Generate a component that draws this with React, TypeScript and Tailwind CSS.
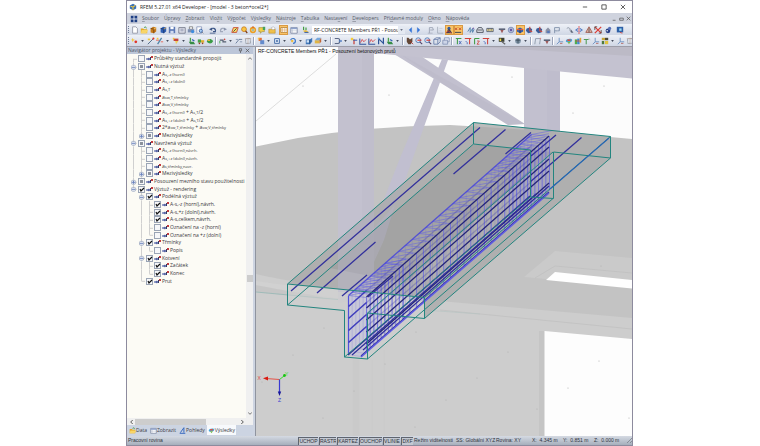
import React from "react";

type Kids = { children?: React.ReactNode };

/* ---------- toolbar glyphs, all on a 10 x 10 grid ---------- */

const glyphs: Record<string, React.ReactNode> = {
  new: <path d="M2 1h4l2 2v6H2z" fill="#fff" stroke="#8a8fa0" />,
  open: (<><path d="M1 3h3l1 1h4v5H1z" fill="#e5a823" /><path d="M2 5h8L8 9H1z" fill="#f8d568" /><path d="M5 2l2-1 1 2" stroke="#3d9440" fill="none" /></>),
  cubeOrange: (<><path d="M2 3l3-2 4 1v5L6 9 2 8z" fill="#c77a1b" /><path d="M2 3l4 1v5" stroke="#6b3d0c" fill="none" /><path d="M6 4l3-2" stroke="#f9dd8c" /></>),
  cubeBlue: (<><path d="M2 3l3-2 4 1v5L6 9 2 8z" fill="#2e5fb5" /><path d="M2 3l4 1v5" stroke="#16305f" fill="none" /><path d="M6 4l3-2" stroke="#f0b040" /></>),
  save: (<><path d="M1 1h8v8H1z" fill="#5b78b5" /><path d="M3 1h4v3H3z" fill="#fff" /><path d="M3 6h4v3H3z" fill="#d3dcf0" /></>),
  doc: (<><path d="M1 2h8v7H1z" fill="#e3e5ee" stroke="#6b7082" /><path d="M3 4h4M3 6h4" stroke="#8289a5" /></>),
  print: (<><path d="M3 1h4v3H3z" fill="#fff" stroke="#777" /><path d="M1 4h8v4H1z" fill="#7e8fb0" /><circle cx="7" cy="7" r="2" fill="#3d8de0" /></>),
  preview: (<><path d="M1 1h6v8H1z" fill="#fff" stroke="#8794b8" /><circle cx="6" cy="6" r="2" fill="#a9d0f5" stroke="#335c9e" /><path d="M8 8l1 1" stroke="#333" /></>),
  undo: (<><path d="M2 5c2-4 7-2 6 2H5" fill="none" stroke="#3c5687" strokeWidth="1.4" /><path d="M0 4l4-2v4z" fill="#3c5687" /><path d="M1 9h7" stroke="#3c5687" /></>),
  redo: (<><path d="M8 5c-2-4-7-2-6 2h3" fill="none" stroke="#a0a8ba" strokeWidth="1.4" /><path d="M10 4L6 2v4z" fill="#8b95ad" /></>),
  plane: (<><path d="M3 2h6L7 8H1z" fill="#f7e06b" stroke="#c43a2b" /><path d="M3 7l4-4" stroke="#333" /></>),
  zoom: (<><circle cx="5" cy="4" r="3" fill="#f9c646" stroke="#c67b20" /><path d="M7 6l2 3" stroke="#7d3c15" strokeWidth="1.6" /></>),
  ring: (<><circle cx="5" cy="5" r="3" fill="none" stroke="#eb9f22" strokeWidth="2" /><circle cx="5" cy="5" r="1" fill="#5c9c3a" /><path d="M5 0v3" stroke="#c74528" /></>),
  chat: (<><path d="M1 2h7v5H5L3 9V7H1z" fill="#f3cf45" stroke="#8c7420" strokeWidth=".6" /><path d="M6 1h3v4H6z" fill="#46a05a" /></>),
  folderUp: (<><path d="M1 4h8v5H1z" fill="#f0c04a" stroke="#ae7e1e" strokeWidth=".6" /><path d="M4 2l3-1 2 2-3 2z" fill="#fff" stroke="#999" strokeWidth=".6" /></>),
  table: (<><path d="M1 2h8v7H1z" fill="#fff" stroke="#76809c" /><path d="M1 2h8v2H1z" fill="#8ea2cc" /><path d="M3 4v5M1 6h8" stroke="#a7b0c5" strokeWidth=".6" /></>),
  tableHot: (<><path d="M1 2h8v6H1z" fill="#fff" stroke="#b07a2c" /><path d="M3 2v6M6 2v6M1 5h8" stroke="#d79a50" strokeWidth=".7" /></>),
  load: (<><path d="M2 1v4M5 2v3" stroke="#3e9a3b" strokeWidth="1.4" /><path d="M1 6l4-1 4 3H4z" fill="#e8bb3c" /><path d="M3 8h5" stroke="#2f58a8" strokeWidth="1.2" /></>),
  prev: <path d="M7 2L4 5l3 3z" fill="#3473d8" stroke="#3473d8" strokeWidth=".6" />,
  next: <path d="M3 2l3 3-3 3z" fill="#3473d8" stroke="#3473d8" strokeWidth=".6" />,
  greyTool: (<><path d="M3 9V2h4l1 3H4" fill="none" stroke="#949cad" /><path d="M1 9h6" stroke="#a9b0bf" /></>),
  greyAxis: (<><path d="M2 1v8h7" fill="none" stroke="#a1a9b8" /><path d="M4 3h4M4 6h3" stroke="#c8cdd7" /></>),
  people: (<><circle cx="5" cy="3" r="2" fill="#32599e" /><path d="M1 9l3-5h2l3 5z" fill="#3e4256" /><path d="M1 9l3-3 4 3" stroke="#d83b2e" fill="none" /></>),
  xx: (<><path d="M1 2l3 3m0-3L1 5M6 2l3 3m0-3L6 5" stroke="#c23f25" /><path d="M1 8h8" stroke="#555" strokeWidth="1.4" /></>),
  wave: (<><path d="M1 7l3-5v6l3-5v5l2-4" fill="none" stroke="#4376a6" /><circle cx="8" cy="3" r="1" fill="#8a6fb1" /></>),
  car: (<><path d="M1 5l2-3h4l2 3v3H1z" fill="#dfe3ea" stroke="#3b404d" /><path d="M2 5h6" stroke="#3b404d" /></>),
  ruler: (<><path d="M1 3h8v4H1z" fill="#fbe695" stroke="#44506c" /><path d="M3 3v3M5 3v3M7 3v3" stroke="#44506c" strokeWidth=".7" /></>),
  beam: (<><path d="M1 3h8v2H1z" fill="#5c6377" /><path d="M3 5l2 4 2-4" fill="#9c5858" /></>),
  gear: (<><circle cx="5" cy="5" r="3.5" fill="#b2bdd9" stroke="#57699c" strokeWidth=".7" /><circle cx="5" cy="5" r="1.5" fill="#6356a4" /></>),
  solid: (<><path d="M1 4l4-2 4 2v3L5 9 1 7z" fill="#375fa9" /><path d="M1 4l4 1 4-1" stroke="#ec5a3f" fill="none" strokeWidth="1.4" /><path d="M5 5v4" stroke="#182f5a" /></>),
  dice: (<><path d="M2 3l4-1 3 2-1 4-4 1-3-3z" fill="#395d9c" /><path d="M6 1v5l3 1" fill="none" stroke="#d54a39" strokeWidth="1.4" /></>),
  house: (<><path d="M2 9V5l3-3 3 3v4z" fill="#8a91a5" /><path d="M4 9V6h3v3z" fill="#5578bb" /></>),
  flag: (<><path d="M2 9V2h6v4H2" fill="none" stroke="#8797af" strokeWidth="1.2" /><path d="M3 8l4-4" stroke="#bac3d2" /></>),
  arc: (<><path d="M1 3c3-2 4 0 4 2s2 3 4 3" fill="none" stroke="#7c8797" /><path d="M6 4l3 4H6z" fill="#5a6475" /></>),
  mirror: (<><path d="M5 0v10" stroke="#e04343" /><path d="M4 3L1 5l3 2M6 3l3 2-3 2" fill="none" stroke="#507bc4" strokeWidth="1.3" /></>),
  tri: (<><path d="M5 1l4 7H1z" fill="#e4b5a7" stroke="#9b5244" /><path d="M5 3v5" stroke="#444" /></>),
  cross: (<><path d="M1 1l8 8M9 1L1 9" stroke="#dc3a32" strokeWidth="1.5" /><path d="M1 5V1h3M9 5v4H6" stroke="#57443e" fill="none" /></>),
  ball: (<><circle cx="5" cy="6" r="3" fill="#273e86" /><circle cx="7" cy="3" r="2" fill="#5871ba" /><circle cx="4" cy="6" r="1" fill="#eee" /></>),
  node: (<><circle cx="6" cy="6" r="1.7" fill="#df3328" /><path d="M2 1l1 2 2 .5-2 1-1 2-.5-2L0 3.500l1.500-.5z" fill="#f3c534" /></>),
  line: (<><path d="M1 9l7-7" stroke="#4e6c88" strokeWidth="1.200" /><circle cx="8" cy="2" r="1.300" fill="#df3328" /><path d="M1 2h3v2H1z" fill="#f3c534" /></>),
  member: (<><path d="M2 9l5-8" stroke="#4e85a8" strokeWidth="1.600" /><path d="M0 4h4M6 6h3" stroke="#e45645" /><path d="M1 1h2v2H1z" fill="#f3c534" /></>),
  surface: (<><path d="M2 2h6v3H2z" fill="#c6453a" /><path d="M4 5h4L5 9z" fill="#f0ce5c" /><path d="M1 1h2v2H1z" fill="#f3c534" /></>),
  support: (<><path d="M3 1v5" stroke="#4ba04b" strokeWidth="1.600" /><path d="M1 6h6l2 3H3z" fill="#358c46" /><path d="M5 3l3 2" stroke="#3563b2" strokeWidth="1.500" /></>),
  truck: (<><path d="M1 3h4v4H1z" fill="#4aa24a" /><path d="M5 4h4v3H5z" fill="#ddaf2e" /><circle cx="3" cy="8" r="1" fill="#953d28" /><circle cx="7" cy="8" r="1" fill="#953d28" /></>),
  leaf: (<><path d="M1 6c0-4 5-5 8-1-2 4-5 4-8 1z" fill="#3a9b45" /><path d="M2 3h3v2H2z" fill="#e3b436" /></>),
  stairs: (<><path d="M1 4h4v2h4" stroke="#555f70" strokeWidth="1.500" fill="none" /><path d="M1 8V5" stroke="#3aa23e" /><circle cx="7" cy="3" r="1" fill="#d2473a" /></>),
  dim: (<><path d="M1 8l4-5h4" stroke="#566b8b" fill="none" /><path d="M1 3h3M6 6h3" stroke="#7c8da8" /></>),
  grid: (<><path d="M2 2h6v6H2z" fill="none" stroke="#82868f" strokeDasharray="1 .5" /><path d="M1 2h8M5 1v8" stroke="#bb9b8c" strokeWidth=".6" /></>),
  pick: (<><path d="M2 1h4v4H2z" fill="#e57038" /><path d="M4 4h5v5H4z" fill="#648bcc" /><path d="M1 1h2v2H1z" fill="#f6cb46" /></>),
  frame: (<><path d="M2 2h6v6H2z" fill="#dfe8f7" stroke="#4b72a9" strokeWidth="1.200" /><circle cx="5" cy="5" r="1.300" fill="#4b72a9" /></>),
  rot: (<><path d="M2 4c1-3 6-3 6 1 0 3-2 3-3 3" fill="none" stroke="#3b76c8" strokeWidth="1.500" /><circle cx="4" cy="5" r="1.500" fill="#efbd40" /></>),
  cubeSky: (<><path d="M1 3h5l3-2v5L6 9H1z" fill="#3f76b8" /><path d="M2 4h3v3H2z" fill="#cfe3f7" /><path d="M6 3v6" stroke="#234a80" /></>),
  boxGold: (<><path d="M1 4h6v4H1z" fill="#e0b545" /><path d="M1 4l3-3h5L7 4z" fill="#76a7dc" /><path d="M7 4l2-3v5L7 8z" fill="#c26534" /></>),
  frameArrow: (<><path d="M1 2h4c3 0 3 6 0 6H1" fill="none" stroke="#5c6987" strokeWidth="1.300" /><path d="M6 5h4" stroke="#4171c0" strokeWidth="1.500" /></>),
  pin: (<><path d="M5 3v6" stroke="#c63a33" strokeWidth="1.500" /><path d="M1 1h3v3H1z" fill="#f5cd3b" /><path d="M4 4h5" stroke="#3a5cad" strokeWidth="1.300" /></>),
  graph: (<><path d="M1 2v7h8" stroke="#35549a" fill="none" strokeWidth="1.300" /><path d="M2 7l2-4 2 3 3-3" stroke="#d43d42" fill="none" /></>),
  n: (<><path d="M2 9V2l6 6V1" stroke="#2d5499" strokeWidth="1.500" fill="none" /><path d="M1 1h2v2H1z" fill="#62a4dc" /></>),
  cat: (<><path d="M1 1h2l2 2 3-2v5l-2 3H3L1 6z" fill="#624737" /><path d="M5 5l4 4" stroke="#b0342c" /></>),
  zoomRed: (<><circle cx="4" cy="4" r="3" fill="#dbe9fa" stroke="#446ba9" /><path d="M3 4h5" stroke="#d63a34" strokeWidth="1.500" /><path d="M6 6l3 3" stroke="#513f64" strokeWidth="1.300" /></>),
  wire: (<><path d="M1 3h5v6H1zM6 3l3-2v5L6 9M1 3l3-2h5" fill="none" stroke="#6278a6" /></>),
  copy: (<><path d="M3 1h6v5H3z" fill="#e5e9f3" stroke="#8290b2" /><path d="M1 4h6v5H1z" fill="#cdd5e8" stroke="#8290b2" /></>),
  viewX: (<><path d="M1 2h7M3 2v7" stroke="#3f9b45" strokeWidth="1.300" /><path d="M5 5l3 4M8 5L5 9" stroke="#3c60b5" /></>),
  viewY: (<><path d="M1 2h8M7 2v7" stroke="#d1433b" strokeWidth="1.300" /><path d="M2 5l2 2v2" stroke="#3c60b5" fill="none" /></>),
  viewZ: (<><path d="M2 2h6M2 2v7" stroke="#3f9b45" strokeWidth="1.300" /><path d="M5 5h3L5 9h3" stroke="#d1433b" fill="none" /></>),
  dark: (<><path d="M1 1h7v5H1z" fill="#3b3f33" /><path d="M2 2h2v3H2z" fill="#f0d94b" /><path d="M5 6l4 3" stroke="#666" strokeWidth="1.500" /></>),
  sphere: (<><circle cx="5" cy="5" r="3.500" fill="#7d91a4" /><path d="M2 4h6M5 2v6" stroke="#394957" /></>),
  pi: (<><path d="M1 9l1-7h6L7 9" fill="none" stroke="#929eae" strokeWidth="1.200" /><circle cx="8" cy="2" r="1" fill="#df8883" /></>),
  axis: (<><path d="M4 1v5L1 9M4 6h5" stroke="#5e86bd" fill="none" /><path d="M5 8h3" stroke="#b35e57" /></>),
  pencil: (<><path d="M1 9h8M2 8l5-7v7" stroke="#3567bf" fill="none" strokeWidth="1.400" /></>),
  palette: (<><path d="M1 5c0-3 8-4 8-1S1 8 1 5z" fill="#45a5d9" /><path d="M3 3h4v2H3z" fill="#e24e3d" /><path d="M3 6h4l-2 3z" fill="#7dbd48" /></>),
  rainbow: (<><path d="M1 3h3v6H1z" fill="#4caf50" /><path d="M4 2h3v7H4z" fill="#3f8ad0" /><path d="M7 1h2v6H7z" fill="#e0a13c" /><path d="M2 5h5" stroke="#d84838" /></>),
  tool: (<><path d="M4 9V3M1 3h6" stroke="#4f9a57" strokeWidth="1.300" /><path d="M7 1l2 3" stroke="#bbb" /></>),
  mosaic: (<><path d="M1 1h4v3H1z" fill="#c7a63a" /><path d="M5 1h4v3H5z" fill="#4c4a38" /><path d="M1 5h3v4H1z" fill="#4f7b3e" /><path d="M5 5h4v4H5z" fill="#e0c33d" /></>),
  win: (<><path d="M1 1h8v8H1z" fill="#1e3f84" /><path d="M5 1v8M1 5h8" stroke="#fff" /></>),
  app: (<><path d="M1 3l4-2 4 2v4L5 9 1 7z" fill="#3770b7" /><path d="M2 4l3 1v4M5 5l3-2" stroke="#f2c63b" fill="none" strokeWidth="1.300" /></>),
  result: (<><path d="M1 1h8v7H1z" fill="#2d5fa7" /><path d="M4 3h3v3H4z" fill="#9ddcf4" /><path d="M5 8l3 1" stroke="#d33c35" /></>),
};

const Glyph = ({ name, className = "size-[9px]" }: { name: string; className?: string }) => (
  <svg viewBox="0 0 10 10" className={`shrink-0 ${className}`} aria-hidden="true">{glyphs[name]}</svg>
);

/* ---------- toolbars ----------
   "*name" is a pressed tool, "v" a drop-down arrow, "|" a divider */

const Tool = ({ code }: { code: string }) => {
  if (code === "|")
    return <span className="mx-[1px] h-[8px] w-[2px] shrink-0 border-l border-[#9aa3b8] bg-white" />;
  if (code === "v")
    return (
      <button aria-label="Další" className="flex w-[7px] shrink-0 items-center justify-center">
        <svg viewBox="0 0 4 3" className="h-[2px] w-[3px]"><path d="M0 0h4L2 3z" fill="#444b5c" /></svg>
      </button>
    );
  const on = code.startsWith("*");
  const name = on ? code.slice(1) : code;
  return (
    <button aria-label={name} className={`flex h-[10px] w-[9px] shrink-0 items-center justify-center ${on ? "bg-[#fbc466] outline-1 -outline-offset-1 outline-[#d99a45]" : ""}`}>
      <Glyph name={name} className="size-[8px]" />
    </button>
  );
};

const groupsA: [string, string[]][] = [
  ["w-[75px]", ["new", "open", "cubeOrange", "cubeBlue", "save", "doc", "print", "preview"]],
  ["w-[19px]", ["undo", "redo"]],
  ["w-[46px]", ["plane", "zoom", "ring", "chat", "folderUp"]],
  ["w-[19px]", ["*tableHot", "table"]],
  ["w-[9px]", ["load"]],
];
const groupsB: [string, string[]][] = [
  ["w-[18px]", ["prev", "next"]],
  ["w-[37px]", ["greyTool", "greyAxis", "*people", "*xx"]],
  ["w-[28px]", ["wave", "car", "ruler"]],
  ["w-[65px]", ["beam", "gear", "*solid", "dice", "dice", "house", "flag"]],
  ["w-[47px]", ["arc", "mirror", "tri", "cross", "ball"]],
  ["w-[9px]", ["result"]],
];

const Group = ({ width, items }: { width: string; items: string[] }) => (
  <div className={`flex shrink-0 justify-between ${width}`}>
    {items.map((c, i) => <Tool key={i} code={c} />)}
  </div>
);

const rowTwo =
  "node v line member v surface v support truck leaf | stairs v dim grid | pick v frame v rot v cubeSky boxGold v | frameArrow v pin graph graph n support v | cat zoomRed zoomRed wire copy | viewX viewY viewZ viewY v dark v sphere v | pi beam | axis palette rainbow tool axis mosaic v axis grid".split(" ");

const Grip = () => <span className="mx-[1px] h-[7px] w-[1px] shrink-0 border-l border-dotted border-[#6f7a96]" />;

const menus = ["Soubor", "Úpravy", "Zobrazit", "Vložit", "Výpočet", "Výsledky", "Nástroje", "Tabulka", "Nastavení", "Developers", "Přídavné moduly", "Okno", "Nápověda"];
const hotKey: Record<string, number> = { Úpravy: 2, Vložit: 3, Výpočet: 2, Výsledky: 5, Nastavení: 5, "Přídavné moduly": 3 };

/* ---------- navigator tree ---------- */

const S = ({ children }: Kids) => <span className="text-[4px]">{children}</span>;

type Row = { g: string; state: 0 | 1 | 2; label: React.ReactNode };
/* g: one letter per guide column: f first, t tee, l last, v line, o empty, - open, + closed, e open and last */
const rows: Row[] = [
  { g: "f", state: 0, label: "Průběhy standardně propojit" },
  { g: "-", state: 2, label: "Nutná výztuž" },
  { g: "vt", state: 0, label: <>A<S>s,-z (horní)</S></> },
  { g: "vt", state: 0, label: <>A<S>s,+z (dolní)</S></> },
  { g: "vt", state: 0, label: <>A<S>s,T</S></> },
  { g: "vt", state: 0, label: <>a<S>sw,T,třmínky</S></> },
  { g: "vt", state: 0, label: <>a<S>sw,V,třmínky</S></> },
  { g: "vt", state: 0, label: <>A<S>s,-z (horní)</S> + A<S>s,T</S>/2</> },
  { g: "vt", state: 0, label: <>A<S>s,+z (dolní)</S> + A<S>s,T</S>/2</> },
  { g: "vt", state: 0, label: <>2*a<S>sw,T,třmínky</S> + a<S>sw,V,třmínky</S></> },
  { g: "v+", state: 2, label: "Mezivýsledky" },
  { g: "-", state: 2, label: "Navržená výztuž" },
  { g: "vt", state: 0, label: <>A<S>s,-z (horní),návrh.</S></> },
  { g: "vt", state: 0, label: <>A<S>s,+z (dolní),návrh.</S></> },
  { g: "vt", state: 0, label: <>a<S>s,třmínky,navr.</S></> },
  { g: "v+", state: 2, label: "Mezivýsledky" },
  { g: "+", state: 2, label: "Posouzení mezního stavu použitelnosti" },
  { g: "e", state: 1, label: "Výztuž - rendering" },
  { g: "o-", state: 1, label: "Podélná výztuž" },
  { g: "ovt", state: 1, label: "A-s,-z (horní),návrh." },
  { g: "ovt", state: 1, label: "A-s,+z (dolní),návrh." },
  { g: "ovt", state: 1, label: "A-s,celkem,návrh." },
  { g: "ovt", state: 0, label: "Označení na -z (horní)" },
  { g: "ovl", state: 0, label: "Označení na +z (dolní)" },
  { g: "o-", state: 1, label: "Třmínky" },
  { g: "ovl", state: 0, label: "Popis" },
  { g: "o-", state: 1, label: "Kotvení" },
  { g: "ovt", state: 1, label: "Začátek" },
  { g: "ovl", state: 1, label: "Konec" },
  { g: "ol", state: 1, label: "Prut" },
];

const Guide = ({ k }: { k: string }) => {
  const box = "-+e".includes(k);
  const art = (
    <svg viewBox="0 0 8 8" preserveAspectRatio="none" className="size-full" stroke="#cfcfcf" strokeWidth="1" fill="none">
      {"tv-+".includes(k) && <path d="M4.500 0v8" />}
      {k === "f" && <path d="M4.500 4v4" />}
      {"le".includes(k) && <path d="M4.500 0v4" />}
      {k !== "v" && k !== "o" && <path d="M4.500 4.500H8" />}
      {box && <rect x="2.500" y="2.500" width="4" height="4" rx="1" fill="#eef1f8" stroke="#a9b3c8" />}
      {box && <path d="M3 4.500h3" stroke="#6a83bd" />}
      {k === "+" && <path d="M4.500 3v3" stroke="#6a83bd" />}
    </svg>
  );
  return box
    ? <button aria-label="Rozbalit" className="h-full w-[8px] shrink-0">{art}</button>
    : <span className="h-full w-[8px] shrink-0">{art}</span>;
};

const TreeRow = ({ g, state, label }: Row) => (
  <div className="flex min-h-0 items-center">
    {g.split("").map((k, i) => <Guide key={i} k={k} />)}
    <label className="flex items-center whitespace-nowrap">
      <span className="mx-[1px] grid size-[7px] shrink-0">
        <input type="checkbox" defaultChecked={state === 1} className="col-start-1 row-start-1 size-[7px] appearance-none border border-[#9aa4b5] bg-[#f6f7f9]" />
        {state === 1 && (
          <svg viewBox="0 0 7 7" className="pointer-events-none col-start-1 row-start-1 size-[7px]"><path d="M2 3l1 2 3-3" fill="none" stroke="#111" strokeWidth="1.200" /></svg>
        )}
        {state === 2 && <span className="pointer-events-none col-start-1 row-start-1 m-[2px] bg-[#8b919b]" />}
      </span>
      <svg viewBox="0 0 7 5" className="mr-[1px] h-[5px] w-[7px] shrink-0">
        <path d="M0 3h2" stroke="#33469a" />
        <circle cx="2.800" cy="3" r="1.200" fill="#5664a5" />
        <path d="M5 0h2v2H5z" fill="#c23a3e" />
        <path d="M4.500 1v3" stroke="#333a62" />
      </svg>
      <span className="h-[7px] text-[5px] leading-[7px] text-[#37373a]">{label}</span>
    </label>
  </div>
);

/* ---------- 3D view ---------- */

const DX = 183;
const DY = -161;
const stirrups: number[] = [];
for (let t = 0; t < 0.2; t += 0.02) stirrups.push(t);
for (let t = 0.2; t < 0.78; t += 0.037) stirrups.push(t);
for (let t = 0.78; t <= 1.001; t += 0.02) stirrups.push(t);

const barHeights = [0, 11, 23, 35, 47];

const Cage = () => (
  <g fill="none">
    <path d="M348 296V355L361 357L380 340V286L366 298Z" fill="#b8b6f2" fillOpacity=".25" />
    <path d="M510 170V224L549 191V136Z" fill="#8a88e4" fillOpacity=".2" />
    <g stroke="#6866de" strokeWidth="1">
      {stirrups.map((t, i) => {
        const x = 348.5 + DX * t;
        const y = 295.5 + DY * t;
        return (
          <g key={i}>
            <path d={`M${x} ${y}V${y + 59}L${x + 12} ${y + 61}L${x + 18} ${y + 56}`} strokeOpacity=".22" />
            <path d={`M${x + 18} ${y + 2}V${y + 56}`} strokeOpacity=".8" />
            <path d={`M${x} ${y}L${x + 18} ${y + 2}M${x} ${y}L${x + 21} ${y - 4}`} strokeOpacity=".7" strokeWidth=".8" />
          </g>
        );
      })}
    </g>
    <path d="M348.500 296V355" stroke="#5250dc" strokeWidth="1.200" />
    <g stroke="#242478" strokeWidth="1.300">
      {barHeights.map((h) => (
        <g key={h}>
          <path d={`M348.500 ${295.5 + h}L${348.5 + DX} ${295.5 + h + DY}`} strokeOpacity={h ? ".3" : ".9"} stroke={h ? "#3737ae" : "#4a48d8"} />
          <path d={`M366.500 ${297 + h}L549 ${136 + h}`} />
          {h > 0 && <path d={`M348.500 ${295.5 + h}L366.500 ${279.5 + h}`} stroke="#3f3dbd" />}
        </g>
      ))}
    </g>
    <g stroke="#2f2d98" strokeWidth="1.200">
      <path d="M361 356L549 192M363 350L549 186M352 355L536 194M348 355L530 196" />
    </g>
    <path d="M361 357L549 193" stroke="#5f5ce2" strokeWidth="1.600" />
  </g>
);

const dots = [[303, 86], [389, 95], [512, 77], [604, 86], [573, 113], [324, 328], [293, 355], [416, 332], [385, 364], [354, 391], [323, 418], [446, 400], [508, 352], [477, 378], [537, 409], [599, 361], [568, 388], [629, 418], [415, 427], [262, 382], [601, 266]];

const Scene = () => (
  <svg viewBox="256 47 376 389" preserveAspectRatio="xMidYMid slice" className="block size-full">
    <rect x="256" y="47" width="376" height="389" fill="#fcfcfc" />
    <path d="M256 121L336 54" stroke="#d4d4d4" strokeWidth=".8" />
    <path d="M256 146.500L298 138Q370 126 450 125Q540 130 632 139V436H256Z" fill="#c3c3c3" />
    <path d="M256 274C290 282 330 287 440 301L632 318V436H256Z" fill="#cdcdcd" />
    <path d="M256 285Q300 290 330 300L256 292Z" fill="#c6c6c6" />
    <path d="M256 281Q300 288 345 290L345 299Q300 294 256 285Z" fill="#d1d1d1" />
    <path d="M440 310L632 329" stroke="#c3c3c3" />
    <path d="M256 292L338 299.500" stroke="#8db5b1" strokeWidth=".7" />
    <path d="M424 310L480 314" stroke="#b7c4c3" strokeWidth=".7" />
    <path d="M356 360V436" stroke="#c8c8c8" strokeWidth="7" strokeOpacity=".6" />
    <path d="M372 360V436M384 350V436" stroke="#cacaca" strokeWidth="1" />
    <path d="M524 277L555 251L632 258V282L546 279Z" fill="#cacaca" />
    <path d="M535 278L555 266L632 273" fill="none" stroke="#c2c2c2" />
    <path d="M546 280L555 272L632 280V288.500Z" fill="#fefefe" />
    <path d="M539 331H545V436H539Z" fill="#c5c5c5" />
    <path d="M544.500 331L632 339V436H544.500Z" fill="#fdfdfd" />

    <path d="M338 47H374V245H338Z" fill="#c3c1cf" />
    <path d="M338 245H374V296L338 303Z" fill="#c3c1cf" fillOpacity=".4" />
    <path d="M362 47H374V245H362Z" fill="#c0becc" />
    <path d="M442 59L448 60L420 138L384 240H368L400 158Z" fill="#c1bfd0" />
    <path d="M394 54H418L455 79L525 124L508 125L452 90Z" fill="#c2c0cf" />
    <path d="M400 54L525 124L508 125L452 90Z" fill="#b6b4c4" fillOpacity=".3" />
    <path d="M524 64H560V132H524Z" fill="#c2c0cf" />
    <path d="M547 68H560V132H547Z" fill="#bfbdcd" />
    <path d="M374 47H632V78.500L524 68L447 60L384 54H374Z" fill="#c4c2d0" />
    <path d="M480 47H632V56Z" fill="#bcbac6" />
    {dots.map(([x, y], i) => <circle key={i} cx={x} cy={y} r=".6" fill="#b0b0b0" />)}

    <path d="M287.500 284L473.500 122.500L610.500 136.500V158L424.500 318.500V297.500Z" fill="#a9a9a9" fillOpacity=".78" />
    <path d="M330 268L473.500 144.500L553 152L405 283Z" fill="#8d8d8d" fillOpacity=".35" />
    <path d="M287.500 284L424.500 297.500V318.500L367.500 313V359L344.500 357V310.500L287.500 305Z" fill="#cfcfcf" fillOpacity=".55" />
    <path d="M338 240L374 211V292H338Z" fill="#b9b7d2" fillOpacity=".35" />
    <path d="M374 228L395 205L384 240L374 262Z" fill="#b9b7d2" fillOpacity=".3" />
    <Cage />
    <g stroke="#33319c" strokeWidth="1.300" fill="none">
      <path d="M291 291L480 127.500M317 293L375.500 242M453.500 174L505.500 129.500M342 296L367 275M505.500 154L531 132.500M368 297L393 276M531 156L556 135M530 182L581.500 137.500" />
    </g>
    <g stroke="#23857f" strokeWidth="1" fill="none">
      <path d="M287.500 284L424.500 297.500V318.500L367.500 313V359L344.500 357V310.500L287.500 305Z" />
      <path d="M530.500 150L473.500 144V122.500L610.500 136.500V158L553.500 152V198.500L530.500 197Z" />
      <path d="M287.500 284L473.500 122.500M287.500 305L473.500 144M424.500 297.500L610.500 136.500M424.500 318.500L610.500 158M344.500 357L530 197M367.500 359L553 198.500M367.500 313L553 152" />
    </g>
    <path d="M550 189L609 138" stroke="#2866b4" strokeWidth="1.200" />

    <path d="M279.500 379.500L266 378.500" stroke="#e55348" />
    <path d="M263 378.300L268 376.500V380.500Z" fill="#d9180f" />
    <path d="M279.500 379.500L284 376" stroke="#36e02c" />
    <circle cx="284.500" cy="375.500" r="1.400" fill="#16c512" />
    <path d="M279.500 379.500V392" stroke="#3a3ad2" strokeWidth="1.200" />
    <path d="M277.800 391.500H281.200L279.500 396Z" fill="#14149a" />
    <g fontFamily="'Liberation Sans', Arial, sans-serif" fontSize="5">
      <text x="257.500" y="380" fill="#e2463c">X</text>
      <text x="285" y="376" fill="#36e02c">Y</text>
      <text x="278" y="402" fill="#3a3ad2">Z</text>
    </g>
  </svg>
);

/* ---------- status bar and bottom tabs ---------- */

const snaps: [string, string][] = [["UCHOP", "w-[20px]"], ["RASTR", "w-[17px]"], ["KARTEZ", "w-[21px]"], ["OUCHOP", "w-[23px]"], ["VLINIE", "w-[17px]"], ["DXF", "w-[12px]"]];
const tabs: [string, string][] = [["Data", "open"], ["Zobrazit", "table"], ["Pohledy", "pencil"], ["Výsledky", "palette"]];

export default function App() {
  return (
    <div className="flex min-h-screen bg-white pr-[127px] pl-[126px] font-['Open_Sans','Noto_Sans',sans-serif] text-[5px] leading-[7px] text-[#3a3a3f]">
      <div className="flex min-w-0 flex-1 flex-col overflow-hidden border border-[#8d8b9e]">
        <header className="flex h-[12px] shrink-0 items-center bg-white pl-[2px]">
          <Glyph name="app" className="size-[8px]" />
          <h1 className="ml-[3px] flex-1 whitespace-nowrap text-[#222]">RFEM 5.27.01 x64 Developer - [model - 3 beton+ocel2*]</h1>
          {["M1 3.500h5", "M1 1h5v5H1z", "M1 1l5 5M6 1L1 6"].map((d, i) => (
            <button key={i} aria-label={["Minimalizovat", "Maximalizovat", "Zavřít"][i]} className="flex w-[19px] justify-center">
              <svg viewBox="0 0 7 7" className="size-[6px]"><path d={d} fill="none" stroke="#333" strokeWidth=".9" /></svg>
            </button>
          ))}
        </header>

        <nav className="flex h-[11px] shrink-0 items-center bg-[#cfd3de] pl-[3px] text-[#555a66]">
          <Glyph name="win" className="size-[8px]" />
          <div className="ml-[4px] flex flex-1 gap-[5px]">
            {menus.map((m) => {
              const k = hotKey[m] ?? 0;
              return (
                <button key={m} className="whitespace-nowrap">
                  {m.slice(0, k)}<span className="underline decoration-[#9a9eaa]">{m[k]}</span>{m.slice(k + 1)}
                </button>
              );
            })}
          </div>
          {["M1 6h4", "M1 3h5v3H1z", "M1 1l5 5M6 1L1 6"].map((d, i) => (
            <button key={i} aria-label={["Minimalizovat okno", "Obnovit okno", "Zavřít okno"][i]} className="flex w-[7px] justify-center">
              <svg viewBox="0 0 7 7" className="size-[5px]"><path d={d} fill="none" stroke="#555" /></svg>
            </button>
          ))}
        </nav>

        <div className="flex h-[11px] shrink-0 items-center bg-linear-to-b from-[#eef1f7] to-[#d0d7e5]">
          <Grip />
          <div className="flex shrink-0 items-center gap-[3px]">
            {groupsA.map(([w, items], i) => <Group key={i} width={w} items={items} />)}
          </div>
          <select aria-label="Zatěžovací stav" className="ml-[2px] h-[8px] w-[86px] shrink-0 appearance-none overflow-hidden bg-white pl-[2px] text-[5px] leading-[8px] text-[#222]">
            <option>RF-CONCRETE Members PŘ1 - Posouzení</option>
          </select>
          <span className="flex h-[8px] shrink-0 items-center bg-[#e4e9f2]">
            <svg viewBox="0 0 4 3" className="mx-[2px] h-[2px] w-[3px]"><path d="M0 0h4L2 3z" fill="#6b7283" /></svg>
          </span>
          <div className="flex flex-1 items-center gap-[3px]">
            {groupsB.map(([w, items], i) => <Group key={i} width={w} items={items} />)}
          </div>
        </div>
        <div className="flex h-[11px] shrink-0 items-center overflow-hidden bg-linear-to-b from-[#eef1f7] to-[#d0d7e5]">
          <Grip />
          {rowTwo.map((c, i) => <Tool key={i} code={c} />)}
        </div>

        <main className="flex min-h-[389px] flex-1 border-t border-[#9d9da8]">
          <aside className="flex w-[126px] shrink-0 flex-col bg-[#fcfbf5]">
            <div className="flex h-[7px] items-center bg-[#bcc6d8] px-[1px] text-[#4c5668]">
              <h2 className="flex-1 whitespace-nowrap">Navigátor projektu - Výsledky</h2>
              <button aria-label="Připnout" className="w-[7px]"><svg viewBox="0 0 7 7" className="size-[5px]"><path d="M2 1h3v3H2zM3.500 4v3" fill="none" stroke="#555" /></svg></button>
              <button aria-label="Zavřít panel" className="w-[7px]"><svg viewBox="0 0 7 7" className="size-[5px]"><path d="M1 1l5 5M6 1L1 6" stroke="#555" /></svg></button>
            </div>
            <div className="flex flex-1">
              <div className="flex min-w-0 flex-1 flex-col overflow-hidden pt-[1px] pl-[2px]">
                <div className="grid h-[230px] auto-rows-fr">
                  {rows.map((r, i) => <TreeRow key={i} {...r} />)}
                </div>
              </div>
              <div className="flex w-[7px] flex-col items-center justify-between bg-[#f0f0f0] py-[3px]">
                <svg viewBox="0 0 5 3" className="h-[3px] w-[4px]"><path d="M0 3l2.500-2.500L5 3" fill="none" stroke="#555" /></svg>
                <span className="mt-[84px] h-[7px] w-[6px] bg-[#cdcdcd]" />
                <svg viewBox="0 0 5 3" className="h-[3px] w-[4px]"><path d="M0 0l2.500 2.500L5 0" fill="none" stroke="#555" /></svg>
              </div>
            </div>
            <div className="flex h-[7px] items-center bg-[#f0f0f0] pr-[9px] pl-[3px]">
              <svg viewBox="0 0 3 5" className="h-[4px] w-[3px]"><path d="M3 0L.5 2.500L3 5" fill="none" stroke="#333" /></svg>
              <span className="ml-[2px] h-[6px] w-5/8 bg-[#cdcdcd]" />
              <svg viewBox="0 0 3 5" className="ml-auto h-[4px] w-[3px]"><path d="M0 0l2.500 2.500L0 5" fill="none" stroke="#333" /></svg>
            </div>
            <div className="flex h-[11px] items-start gap-[1px] bg-[#ccd4e2] pl-[1px]">
              {tabs.map(([t, icon]) => (
                <button key={t} className={`flex h-[10px] items-center px-[1px] ${t === "Výsledky" ? "bg-[#f7f9fc]" : ""}`}>
                  <Glyph name={icon} className="size-[7px]" />
                  <span>{t}</span>
                </button>
              ))}
            </div>
          </aside>
          <div className="w-[3px] shrink-0 border-r border-[#8f949f] bg-[#cdd4e1]" />
          <section className="relative min-w-0 flex-1">
            <div className="absolute inset-0"><Scene /></div>
            <h2 className="absolute top-[1px] left-[2px] font-['Liberation_Sans',Arial,sans-serif] whitespace-nowrap text-[#111]">RF-CONCRETE Members PŘ1 - Posouzení betonových prutů</h2>
          </section>
        </main>

        <footer className="flex h-[9px] shrink-0 items-center bg-linear-to-b from-[#d5dae3] to-[#a6afbc] pl-[1px] font-['Liberation_Sans',Arial,sans-serif] text-[#2e333c]">
          <span className="w-[170px] shrink-0">Pracovní rovina</span>
          <div className="flex gap-[1px]">
            {snaps.map(([s, w]) => (
              <button key={s} className={`h-[8px] overflow-hidden border-t border-l border-[#5f656f] bg-[#c3c8d1] leading-[6px] ${w}`}>{s}</button>
            ))}
          </div>
          <span className="ml-[1px] w-[42px] shrink-0 whitespace-nowrap">Režim viditelnosti</span>
          <span className="w-[40px] shrink-0 whitespace-nowrap">SS: Globální XYZ</span>
          <span className="w-[36px] shrink-0 whitespace-nowrap">Rovina: XY</span>
          <span className="w-[31px] shrink-0 whitespace-nowrap">X:&nbsp; 4.345 m</span>
          <span className="w-[31px] shrink-0 whitespace-nowrap">Y:&nbsp; 0.851 m</span>
          <span className="shrink-0 whitespace-nowrap">Z:&nbsp; 0.000 m</span>
          <svg viewBox="0 0 5 5" className="ml-auto size-[5px]"><path d="M0 5l5-5M3 5l2-2" stroke="#7b818c" strokeWidth=".8" /></svg>
        </footer>
      </div>
    </div>
  );
}
